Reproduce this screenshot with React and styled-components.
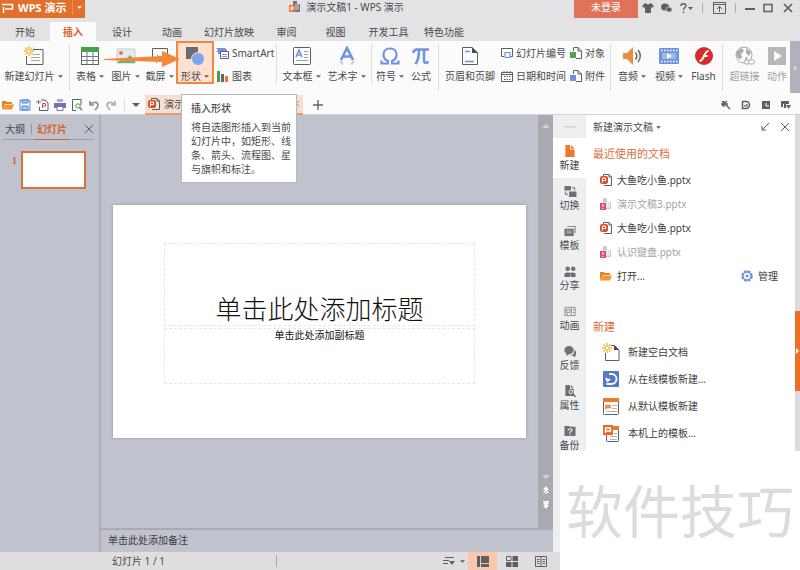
import styled, { createGlobalStyle } from "styled-components";

const GlobalStyle = createGlobalStyle`
  * {
    box-sizing: border-box;
  }

  body {
    margin: 0;
    background: #fff;
    color: #4a4a4a;
    font-family: "Noto Sans", "Noto Sans CJK SC", sans-serif;
    font-size: 10px;
    line-height: 12px;
  }

  button {
    margin: 0;
    padding: 0;
    border: 0;
    background: none;
    color: inherit;
    font: inherit;
    white-space: nowrap;
    cursor: pointer;
  }

  svg {
    display: block;
    flex: none;
  }
`;

const StyledApp = styled.div`
  display: flex;
  flex-direction: column;
  min-height: 100vh;
  overflow: hidden;
`;

const StyledTitleBar = styled.header`
  display: flex;
  height: 22px;
  background: #e3e3e5;
`;

const StyledLogo = styled.button`
  display: flex;
  align-items: center;
  gap: 4px;
  width: 85px;
  height: 18px;
  padding-left: 2px;
  padding-right: 3px;
  padding-bottom: 3px;
  background: #e0702c;
  color: #fff;
  font-size: 11px;
  font-weight: bold;
`;

const StyledLogoMenu = styled.span`
  margin-left: auto;
  padding: 6px 0 6px 4px;
  border-left: 1px solid #e99260;
`;

const StyledWindowTitle = styled.div`
  display: flex;
  flex: 1;
  align-items: center;
  justify-content: center;
  gap: 5px;
  height: 14px;
  padding-left: 34px;
`;

const StyledLogin = styled.button`
  width: 64px;
  height: 18px;
  padding-bottom: 4px;
  background: #e0725a;
  color: #fff;
`;

const StyledWindowTools = styled.div`
  display: flex;
  align-items: center;
  height: 15px;
  width: 162px;
  padding: 0 6px 0 4px;
  justify-content: space-between;
  color: #5c5c60;
`;

const StyledTabs = styled.nav`
  display: flex;
  height: 19px;
  background: #e3e3e5;
`;

const StyledTab = styled.button`
  width: ${({ $width }) => $width}px;
  background: ${({ $active }) => ($active ? "#fbfbfb" : "transparent")};
  color: ${({ $active }) => ($active ? "#dc6526" : "#4a4a4a")};
  font-weight: ${({ $active }) => ($active ? "bold" : "normal")};
`;

const StyledRibbon = styled.div`
  position: relative;
  display: flex;
  height: 54px;
  background: #fbfbfb;
`;

const StyledRibbonButton = styled.button`
  display: flex;
  flex-direction: column;
  align-items: center;
  gap: 4px;
  width: ${({ $width }) => $width}px;
  height: 43px;
  padding-top: 5px;
  opacity: ${({ $disabled }) => ($disabled ? 0.5 : 1)};
  background: ${({ $marked }) => ($marked ? "#fde0d0" : "none")};
  box-shadow: ${({ $marked }) => ($marked ? "inset 0 0 0 2px #f5883a" : "none")};
`;

const StyledLabel = styled.span`
  display: flex;
  align-items: center;
  gap: 3px;
`;

const StyledRibbonList = styled.div`
  display: flex;
  flex-direction: column;
  gap: 11px;
  width: ${({ $width }) => $width}px;
  padding-top: 6px;
  padding-left: 2px;

  & button {
    display: flex;
    align-items: center;
    gap: 3px;
    height: 12px;
  }
`;

const StyledDivider = styled.div`
  width: 1px;
  height: ${({ $height }) => $height || 40}px;
  margin: 3px 2px;
  background: ${({ $dark }) => ($dark ? "#adadb1" : "#dedee0")};
`;

const StyledRibbonMore = styled.button`
  width: 10px;
  height: 52px;
  margin-left: auto;
  background: #b0b1bb;
  color: #fff;
`;

const StyledPointer = styled.svg`
  position: absolute;
  left: 104px;
  top: 9px;
`;

const StyledQuickBar = styled.div`
  position: relative;
  display: flex;
  align-items: center;
  height: 20px;
  background: #fbfbfb;
  border-bottom: 1px solid #d4d5da;
`;

const StyledQuickTools = styled.div`
  display: flex;
  align-items: center;
  gap: ${({ $gap }) => $gap}px;
  margin-left: ${({ $end }) => ($end ? "auto" : 0)};
  padding-left: ${({ $start }) => ($start ? 2 : 0)}px;
  padding-right: ${({ $end }) => ($end ? 9 : 2)}px;
  color: #55555a;
`;

const StyledDocTab = styled.div`
  display: flex;
  align-items: center;
  gap: 4px;
  width: 158px;
  height: 20px;
  margin-left: 3px;
  padding: 0 4px 0 3px;
  background: #f5dfd0;
  border-bottom: 2px solid #e99a70;

  & button {
    margin-left: auto;
  }
`;

const StyledTooltip = styled.div`
  position: absolute;
  z-index: 2;
  left: 181px;
  top: -1px;
  width: 116px;
  padding: 7px 4px 6px 9px;
  border: 1px solid #b9b9bd;
  background: #fff;
  line-height: 14px;

  & strong {
    display: block;
    margin-bottom: 6px;
    line-height: 12px;
    font-weight: 500;
  }
`;

const StyledMain = styled.main`
  display: grid;
  flex: 1;
  grid-template-columns: 1fr 7px 240px;
  grid-template-rows: auto 1fr 18px;
`;

const StyledWorkspace = styled.div`
  grid-column: 1;
  grid-row: 1 / 3;
  display: grid;
  grid-template-columns: 101px 1fr;
  background: #c0c2cd;
`;

const StyledOutline = styled.section`
  padding: 6px 5px 0 3px;
  border-right: 2px solid #adaeb9;
`;

const StyledOutlineTabs = styled.div`
  display: flex;
  align-items: flex-start;
  height: 19px;
  padding-left: 2px;
  border-bottom: 1px solid #9c9da8;
`;

const StyledOutlineTab = styled.button`
  height: 19px;
  padding: 2px 2px 5px;
  padding-left: ${({ $active }) => ($active ? 2 : 0)}px;
  color: ${({ $active }) => ($active ? "#d9622a" : "#4a4a4a")};
  font-weight: ${({ $active }) => ($active ? "bold" : "normal")};
  border-bottom: ${({ $active }) => ($active ? "1px solid #d9622a" : "0")};
`;

const StyledOutlineBar = styled.span`
  width: 1px;
  height: 10px;
  margin: 3px 3px 0 4px;
  background: #8f909a;
`;

const StyledClose = styled.button`
  margin: 4px 1px 0 auto;
`;

const StyledThumbRow = styled.div`
  display: flex;
  gap: 4px;
  padding: 11px 0 0 9px;
  color: #d9622a;
  font-family: "Liberation Serif", serif;
  font-weight: bold;
  line-height: 20px;
`;

const StyledThumb = styled.button`
  width: 65px;
  height: 38px;
  border: 2px solid #d9713a;
  background: #fff;
`;

const StyledEditor = styled.section`
  display: grid;
  grid-template-columns: 1fr 15px;
  grid-template-rows: 1fr 24px;
`;

const StyledCanvas = styled.div`
  display: flex;
  align-items: center;
  justify-content: center;
`;

const StyledSlide = styled.div`
  display: flex;
  flex-direction: column;
  gap: 2px;
  width: calc(100% - 24px);
  aspect-ratio: 16 / 9;
  padding: 38px 51px 54px;
  background: #fff;
  box-shadow: 0 0 3px #8f909c;
  color: #111;
  text-align: center;
`;

const StyledSlideTitle = styled.h1`
  display: flex;
  flex: 3;
  align-items: flex-end;
  justify-content: center;
  margin: 0;
  border: 1px dashed #e6e6e8;
  font-family: "Noto Sans CJK SC", sans-serif;
  font-size: 26px;
  font-weight: 300;
  line-height: 34px;
`;

const StyledSlideSubtitle = styled.p`
  flex: 2;
  margin: 0;
  border: 1px dashed #e6e6e8;
`;

const StyledScroll = styled.div`
  display: flex;
  flex-direction: column;
  align-items: center;
  gap: 5px;
  padding: 8px 0 18px;
  background: #a9a9b2;
  color: #fff;

  & button:first-child {
    margin-bottom: auto;
  }
`;

const StyledNotes = styled.div`
  grid-column: 1 / 3;
  padding: 4px 7px;
  border-top: 2px solid #a9aab5;
  color: #3c3c40;
`;

const StyledGutter = styled.div`
  grid-column: 2;
  grid-row: 2;
  background: #eeeff1;
`;

const StyledStatus = styled.footer`
  grid-column: 1 / 3;
  grid-row: 3;
  display: flex;
  align-items: center;
  background: #dedee0;
  padding: 0 5px 0 112px;
`;

const StyledPage = styled.span`
  width: 165px;
  border-right: 1px solid #a6a6aa;
`;

const StyledViews = styled.div`
  display: flex;
  align-items: stretch;
  height: 18px;
  margin-left: auto;
  color: #5a5a5c;
`;

const StyledView = styled.button`
  display: flex;
  align-items: center;
  justify-content: center;
  gap: 5px;
  width: 29px;
  background: ${({ $active }) => ($active ? "#fac7ae" : "none")};
`;

const StyledAside = styled.aside`
  grid-column: 2 / 4;
  grid-row: 1;
  display: grid;
  grid-template-columns: 33px 1fr 5px;
  background: #fff;
`;

const StyledSideTabs = styled.nav`
  display: flex;
  flex-direction: column;
  background: #eeeff1;
`;

const StyledGrip = styled.span`
  width: 12px;
  height: 2px;
  margin: 11px auto 10px;
  background: #dadbde;
`;

const StyledSideTab = styled.button`
  display: flex;
  flex-direction: column;
  align-items: center;
  gap: 2px;
  padding: 7px 0;
  background: ${({ $active }) => ($active ? "#fff" : "none")};
  color: ${({ $active }) => ($active ? "#3c3c40" : "#4a4a4a")};

  &:last-child {
    padding-bottom: 0;
  }
`;

const StyledPanel = styled.section`
  padding: 6px 6px 0 7px;
`;

const StyledPanelHeader = styled.div`
  display: flex;
  align-items: center;
  gap: 12px;
  height: 12px;

  & button:first-child {
    margin-right: auto;
  }
`;

const StyledPanelTitle = styled.h2`
  margin: ${({ $top }) => $top}px 0 0;
  color: #d9713c;
  font-size: 11px;
  font-weight: normal;
  line-height: 16px;
`;

const StyledPanelList = styled.div`
  display: flex;
  flex-direction: column;
  align-items: flex-start;
  padding-top: ${({ $top }) => $top}px;
`;

const StyledPanelRow = styled.div`
  display: flex;
  justify-content: space-between;
  padding-right: 11px;
`;

const StyledRecent = styled.button`
  display: flex;
  align-items: center;
  gap: 5px;
  height: 24px;
  padding-left: ${({ $plain }) => ($plain ? 0 : 7)}px;
  color: ${({ $missing }) => ($missing ? "#a3a3a6" : "#3c3c40")};
`;

const StyledNewItem = styled(StyledRecent)`
  gap: 8px;
  height: 27px;
  padding-left: 9px;
`;

const StyledEdge = styled.div`
  display: flex;
  align-items: flex-end;
  padding-bottom: 60px;
  background: #dcdce0;

  & button {
    width: 5px;
    height: 80px;
    background: #ee6f23;
  }
`;

const StyledWatermark = styled.div`
  grid-column: 3;
  grid-row: 2 / 4;
  display: flex;
  align-items: center;
  justify-content: center;
  padding-bottom: 6px;
  background: #fff;
  color: #dcdcdc;
  font-family: "Noto Sans CJK SC", sans-serif;
  font-size: 57px;
  line-height: 60px;
  white-space: nowrap;
`;

const GREY = "#5f5f63";
const BLUE = "#6f94dc";
const ORANGE = "#ee7830";

const Icon = ({ w = 12, h = w, box = `0 0 ${w} ${h}`, children }) => (
  <svg width={w} height={h} viewBox={box} fill="none" stroke={GREY} aria-hidden="true">
    {children}
  </svg>
);

const Caret = ({ color = GREY, w = 5 }) => (
  <svg width={w} height={w > 5 ? 4 : 3} viewBox="0 0 6 3" aria-hidden="true">
    <path d="M0 0h6L3 3z" fill={color} />
  </svg>
);

const Cross = ({ size = 8 }) => (
  <Icon w={size} box="0 0 8 8">
    <path d="M0 0l8 8M8 0L0 8" />
  </Icon>
);

const Spark = () => (
  <g stroke="#eeb92c" strokeWidth="1.4">
    <path d="M5 0v2.500M5 7.500V10M0 5h2.500M7.500 5H10M1.500 1.500l1.700 1.700M6.800 6.800l1.700 1.700M8.500 1.500L6.800 3.200M3.200 6.800L1.500 8.500" />
    <circle cx="5" cy="5" r="1.800" fill="#fff" strokeWidth="1" />
  </g>
);

const DocIcon = ({ missing }) => (
  <Icon w={12}>
    {missing ? (
      <>
        <path d="M3 0h4v4h4v7H3z" fill="#cbcbce" stroke="none" />
        <path d="M5 5h5M6 7h4M6 9h4M8 1v2" stroke="#fff" />
        <path d="M0 5h6v7H0z" fill="#dd5064" stroke="none" />
        <path d="M3 6v3M3 10v1" stroke="#fff" />
      </>
    ) : (
      <>
        <path d="M3.500 3V.5H9L11.500 3v8.500H4" />
        <path d="M9 .5V3h2.500" />
        <rect x="0" y="2" width="8" height="8" rx="2" fill="#d9532f" stroke="none" />
        <path d="M2.500 8.500V4h3v2.500h-3" stroke="#fff" />
      </>
    )}
  </Icon>
);

const FolderIcon = () => (
  <Icon w={12} h={10}>
    <path d="M0 9V1h4l1 1h5v2H3z" fill="#e98320" stroke="none" />
    <path d="M3 4h9l-2 5.500H0z" fill="#f5952f" stroke="none" />
    <path d="M2.700 4.500h8" stroke="#fff" strokeWidth=".6" />
  </Icon>
);

const newSlideIcon = (
  <Icon w={20}>
    <path d="M9 3.500h10v15H2.500V10" />
    <path d="M9 8.500h7M7 11.500h9M7 14.500h9" stroke="#a9a9ad" />
    <Spark />
  </Icon>
);

const tableIcon = (
  <Icon w={20}>
    <rect x="1.500" y="1.500" width="17" height="17" fill="#fff" />
    <path d="M1 1h18v5H1z" fill="#48a04a" stroke="none" />
    <path d="M1 10.500h18M1 14.500h18M7 6v13M13 6v13" stroke="#77777b" />
  </Icon>
);

const pictureIcon = (
  <Icon w={20}>
    <path d="M1 3h18v14H1z" fill="#e4eaf2" stroke="#c5cbd4" />
    <circle cx="5" cy="7" r="2" fill={ORANGE} stroke="none" />
    <path d="M1 17l5-5 3 2 5-5 5 5v3z" fill="#7bae6c" stroke="none" />
  </Icon>
);

const captureIcon = (
  <Icon w={20}>
    <path d="M2.500 12V2.500h15V12" />
    <path d="M6 17l7-8M14 17L7 9" stroke="#8a8a8e" />
  </Icon>
);

const shapesIcon = (
  <Icon w={20}>
    <path d="M1 1h12v12H1z" fill="#6c6c70" stroke="none" />
    <circle cx="13" cy="13" r="6.500" fill="#7fa5ea" stroke="#fde0d0" />
  </Icon>
);

const textBoxIcon = (
  <Icon w={20}>
    <rect x="1.500" y="1.500" width="17" height="17" rx="1" />
    <path d="M4 11l3-7 3 7M5 9h4" stroke={BLUE} strokeWidth="1.600" />
    <path d="M12 5.500h4M12 8.500h4M12 11.500h4M4 14.500h12" stroke="#a0a0a4" />
  </Icon>
);

const wordArtIcon = (
  <Icon w={20}>
    <path d="M4 14L10 2l6 12M6 10.500h8" stroke={BLUE} strokeWidth="2.600" />
    <path d="M3.500 15l2 3.500M16.500 15l-2 3.500" stroke="#b9cbee" strokeWidth="2" />
  </Icon>
);

const omegaIcon = (
  <Icon w={20}>
    <path
      d="M1.500 14.500v3H8v-2.500C5 14 3.500 12 3.500 8.800 3.500 5 6 2.500 10 2.500s6.500 2.500 6.500 6.300c0 3.200-1.500 5.200-4.500 6.200v2.500h6.500v-3"
      stroke={BLUE}
      strokeWidth="2.200"
    />
  </Icon>
);

const piIcon = (
  <Icon w={20}>
    <path
      d="M2 7c1-3 2-3.500 4-3.500h12M8 4c0 6-.5 10-3.500 14M13 4v10c0 3 2 4 4.500 1.500"
      stroke={BLUE}
      strokeWidth="2.600"
    />
  </Icon>
);

const headerIcon = (
  <Icon w={20}>
    <path d="M2.500 1.500H12L17.500 7v11.500h-15z" />
    <path d="M12 1v6h6z" fill="#4c4c50" stroke="none" />
    <path d="M5 5.500h5M5 15.500h9" stroke={BLUE} strokeWidth="1.500" />
  </Icon>
);

const audioIcon = (
  <Icon w={20}>
    <path d="M1 7h4l6-6v18l-6-6H1z" fill="#ef8a41" stroke="none" />
    <path d="M13.500 6.500c1.500 2 1.500 5 0 7M16 4c3 3.500 3 8.500 0 12" strokeWidth="1.400" />
  </Icon>
);

const videoIcon = (
  <Icon w={20}>
    <rect x="0" y="2" width="20" height="16" rx="1" fill="#6f94d8" stroke="none" />
    <path d="M2 4.500h17M2 15.500h17" stroke="#fff" strokeWidth="1.500" strokeDasharray="1.500 1.500" />
    <path d="M3 7h14v6H3z" fill="#9db9ea" stroke="none" />
    <path d="M8 7l5 3-5 3z" fill="#fff" stroke="none" />
  </Icon>
);

const flashIcon = (
  <Icon w={20}>
    <circle cx="10" cy="10" r="9" fill="#d92b2b" stroke="none" />
    <path d="M14.500 5C10 5 10 15 5.500 15M9 10h4.500" stroke="#fff" strokeWidth="2" />
  </Icon>
);

const linkIcon = (
  <Icon w={20}>
    <circle cx="9" cy="9" r="8" />
    <path d="M2 5l5-3 2 3-3 3 1 4-3 1-3-4zM11 2l5 4-2 4-3-3zM10 11l3 1-2 4z" fill={GREY} stroke="none" />
    <rect x="9" y="14" width="6" height="4" rx="2" fill="#fff" />
    <rect x="13.500" y="14" width="6" height="4" rx="2" fill="#fff" />
  </Icon>
);

const actionIcon = (
  <Icon w={20}>
    <path d="M1 1h18v18H1z" fill="#77777a" stroke="none" />
    <path d="M7 5l8 5-8 5z" fill="#fff" stroke="none" />
  </Icon>
);

const smartArtIcon = (
  <Icon w={13} h={12}>
    <path d="M0 1h9l2 2v1H4v3H2V5H0l2-2z" fill={BLUE} stroke="none" />
    <path d="M4.500 4.500h8v7h-8z" fill="#fff" />
    <path d="M6 7.500h5M6 9.500h5" stroke={BLUE} />
  </Icon>
);

const chartIcon = (
  <Icon w={13} h={12}>
    <path d="M1 1h3v11H1z" fill="#4d9e4f" stroke="none" />
    <path d="M5 4h3v8H5z" fill="#66666a" stroke="none" />
    <path d="M9 6h3v6H9z" fill={ORANGE} stroke="none" />
  </Icon>
);

const pageNumIcon = (
  <Icon w={12}>
    <path d="M3 9.500H.5v-8h11v8H9" />
    <path d="M4 5.500h5v5H4z" stroke={BLUE} strokeWidth="1.200" />
  </Icon>
);

const calendarIcon = (
  <Icon w={12}>
    <path d="M.5 2.500h11v9H.5zM1 4.500h10" />
    <path d="M3 1v2M6 1v2M9 1v2M3 6.500h7M3 9.500h7" strokeDasharray="1.500 1" />
  </Icon>
);

const attachIcon = (color) => (
  <Icon w={12}>
    <path d="M4 .5h4L11.500 4v7.500H6M8 .5V4h3.500M3.500 4V.5" />
    <path d="M0 5h6v6H0z" fill={color} stroke="none" />
  </Icon>
);

const quickIcons = [
  ["打开", <FolderIcon />],
  [
    "保存",
    <Icon w={12}>
      <path d="M1 1h9l1 1v9H1z" stroke="#4f86d6" />
      <path d="M3 1h6v3H3zM3 7h6v4H3z" fill="#a9c5f0" stroke="#4f86d6" />
    </Icon>,
  ],
  [
    "输出为PDF",
    <Icon w={13} h={12}>
      <path d="M5 1h4l3 3v7.500H3.500V8" />
      <path d="M0 3h5M2.500 1v4" stroke="#48a04a" />
      <path d="M6.500 9V4.500h3V7h-3" stroke="#dd4b52" />
    </Icon>,
  ],
  [
    "打印",
    <Icon w={12}>
      <path d="M3 0h6v3H3z" fill="#aca9d8" stroke="none" />
      <path d="M0 4h12v5H0z" fill="#7671b8" stroke="none" />
      <path d="M3 7.500h6v4H3z" fill="#fff" stroke="#7671b8" />
    </Icon>,
  ],
  [
    "打印预览",
    <Icon w={12}>
      <path d="M5 11.500H1.500V.5H10V6" />
      <circle cx="7" cy="7" r="2.200" stroke="#48a04a" />
      <path d="M8.500 8.500L11 11" stroke="#48a04a" strokeWidth="1.500" />
    </Icon>,
  ],
  [
    "撤销",
    <Icon w={12}>
      <path d="M2 2v4h4M2 6c3-4 8-3 8 0 0 2-1 3-3 5" stroke="#929296" strokeWidth="1.700" />
    </Icon>,
  ],
  [
    "恢复",
    <Icon w={12}>
      <path d="M10 2v4H6M10 6C7 2 2 3 2 6c0 2 1 3 3 5" stroke="#b0b0b4" strokeWidth="1.700" />
    </Icon>,
  ],
];

const quickEndIcons = [
  [
    "魔法",
    <Icon w={10}>
      <path d="M3 1v6M0 4h7M1 1l8 8M6 1L1 6" strokeWidth="1.300" />
    </Icon>,
  ],
  [
    "稻壳",
    <Icon w={10}>
      <path d="M1.500 1.500H5a3.500 3.500 0 010 7H1.500z" strokeWidth="1.500" />
      <path d="M3 5l1 1.500L6 4v3" />
    </Icon>,
  ],
  [
    "历史",
    <Icon w={10}>
      <path d="M1 1h8v8H1z" fill={GREY} stroke="none" />
      <path d="M5 3v3h3" stroke="#fff" />
    </Icon>,
  ],
  [
    "皮肤",
    <Icon w={10}>
      <path d="M0 1h8v3H5v4H3V4H2v3H0z" fill={GREY} stroke="none" />
      <path d="M5 5h5L7.500 9z" fill={GREY} stroke="none" />
    </Icon>,
  ],
];

const tabs = [
  ["开始", 50],
  ["插入", 46],
  ["设计", 52],
  ["动画", 48],
  ["幻灯片放映", 66],
  ["审阅", 49],
  ["视图", 49],
  ["开发工具", 57],
  ["特色功能", 54],
];

const sideTabs = [
  ["新建", <path d="M2 0h5v5h5v8H2zM8 0l4 4H8z" fill={ORANGE} stroke="none" />],
  [
    "切换",
    <>
      <path d="M1 1h7v5H1zM6 7h8v6H6z" fill="#707074" stroke="none" />
      <path d="M9 3h3v3M2 7v3h3" />
    </>,
  ],
  [
    "模板",
    <>
      <path d="M4 1h9v8h-1V2H4z" fill="#707074" stroke="none" />
      <path d="M1 4h10v8H1z" fill="#707074" stroke="none" />
      <path d="M3 6.500h6M3 8.500h6" stroke="#c5c5c8" />
    </>,
  ],
  [
    "分享",
    <path
      d="M1 13V9l3-1h2l1 1 1-1h2l3 1v4H8V9.500L7 13zM2 4a2.500 2.500 0 015 0 2.500 2.500 0 01-5 0zM8 4a2.500 2.500 0 015 0 2.500 2.500 0 01-5 0z"
      fill="#707074"
      stroke="none"
    />,
  ],
  [
    "动画",
    <>
      <path d="M1.500 2.500h11v9h-11zM8.500 3v8" stroke="#88888c" />
      <path d="M3 5h4v3H3zM10 5h2M10 8h2M4 9v2" stroke="#88888c" />
    </>,
  ],
  [
    "反馈",
    <path
      d="M6 1c3 0 5 2 5 4.500S9 10 6 10l-3 2v-3C-.5 7 .5 1 6 1zM12 5c2 2 2 4 1 6v2l-3-1H7c3 0 5-3 5-7z"
      fill="#707074"
      stroke="none"
    />,
  ],
  [
    "属性",
    <>
      <path d="M2 0h5v4h4v8H2zM8 0l3 3H8z" fill="#707074" stroke="none" />
      <circle cx="8" cy="7.500" r="2" stroke="#fff" />
      <path d="M9.500 9L13 13" strokeWidth="1.500" />
    </>,
  ],
  [
    "备份",
    <>
      <path d="M1 1h5l1 1h6v10H1z" fill="#707074" stroke="none" />
      <path d="M5 6c0-3 5-2 4 0L7 8v1M7 10v1" stroke="#fff" strokeWidth="1.200" />
    </>,
  ],
];

const recents = [
  ["大鱼吃小鱼.pptx", false],
  ["演示文稿3.pptx", true],
  ["大鱼吃小鱼.pptx", false],
  ["认识键盘.pptx", true],
];

const newItems = [
  [
    "新建空白文档",
    <Icon w={18}>
      <path d="M9 2.500h3.500L17 7v10.500H3.500V10" />
      <path d="M12 2v5h5z" fill="#4c4c50" stroke="none" />
      <Spark />
    </Icon>,
  ],
  [
    "从在线模板新建...",
    <Icon w={18}>
      <rect x="1" y="1" width="16" height="16" rx="1" fill="#5479c8" stroke="none" />
      <path d="M7 4h2.500a5 5 0 010 10H4.500M4 8l1.500 3L8 9" stroke="#fff" strokeWidth="1.800" />
    </Icon>,
  ],
  [
    "从默认模板新建",
    <Icon w={18}>
      <rect x="1.500" y="1.500" width="15" height="16" rx="1" />
      <path d="M1 1h16v4H1z" fill={ORANGE} stroke="none" />
      <path d="M4 12.500V8.500h4v2H4" stroke={ORANGE} strokeWidth="1.300" />
      <path d="M10 8.500h5M10 11.500h5M4 14.500h11" stroke="#b4b4b8" />
    </Icon>,
  ],
  [
    "本机上的模板...",
    <Icon w={18}>
      <rect x="4.500" y="2.500" width="12" height="15" rx="1" fill="#fff" />
      <path d="M5 2h12v4H5z" fill={ORANGE} stroke="none" />
      <path d="M12 9.500h3M8 12.500h7M8 15.500h7" stroke="#b4b4b8" />
      <path d="M1 1h10v10H1z" fill="#e86a24" stroke="none" />
      <path d="M3.500 9V4h5v3h-5" stroke="#fff" strokeWidth="1.400" />
    </Icon>,
  ],
];

const RibbonButton = ({ label, icon, width, menu, marked, disabled }) => (
  <StyledRibbonButton $width={width} $marked={marked} $disabled={disabled}>
    {icon}
    <StyledLabel>
      {label}
      {menu && <Caret />}
    </StyledLabel>
  </StyledRibbonButton>
);

const TitleBar = () => (
  <StyledTitleBar>
    <StyledLogo>
      <Icon w={12} h={10}>
        <path d="M0 1.500h10.500v4.500H3M1.500 4v6" stroke="#fff" strokeWidth="1.500" />
      </Icon>
      WPS 演示
      <StyledLogoMenu>
        <Caret color="#fff" />
      </StyledLogoMenu>
    </StyledLogo>
    <StyledWindowTitle>
      <Icon w={12}>
        <path d="M4 0h4v3h3v8H4z" fill="#77777b" stroke="none" />
        <path d="M6 4h4M6 6h4M6 8h4" stroke="#d6d6d8" />
        <path d="M0 4h6v7H0z" fill={ORANGE} stroke="none" />
        <path d="M2 9.500V6h2v2H2" stroke="#fff" />
      </Icon>
      演示文稿1 - WPS 演示
    </StyledWindowTitle>
    <StyledLogin>未登录</StyledLogin>
    <StyledWindowTools>
      <button aria-label="皮肤">
        <Icon w={12} h={10}>
          <path d="M3 0l3 1.500L9 0l3 3-2 2-1-1v6H3V4L2 5 0 3z" fill={GREY} stroke="none" />
        </Icon>
      </button>
      <button aria-label="反馈">
        <Icon w={11} h={10}>
          <ellipse cx="4" cy="4" rx="4" ry="3.500" fill={GREY} stroke="none" />
          <ellipse cx="8" cy="6.500" rx="3" ry="2.500" fill={GREY} stroke="#e3e3e5" strokeWidth=".6" />
        </Icon>
      </button>
      <button aria-label="帮助">
        <Icon w={13} h={10}>
          <path d="M1 3c0-3 5-3 5-.5C6 4.500 3.500 4 3.500 7M3.500 8.500V10" strokeWidth="1.400" />
          <path d="M8 4h5l-2.500 3z" fill={GREY} stroke="none" />
        </Icon>
      </button>
      <StyledDivider $height={10} $dark />
      <button aria-label="收起功能区">
        <Icon w={13} h={12}>
          <path d="M.5.500h12v11H.5zM1 2.500h11M6.500 10V4.500M4 7l2.500-2.500L9 7" />
        </Icon>
      </button>
      <StyledDivider $height={10} $dark />
      <button aria-label="最小化">
        <Icon w={10}>
          <path d="M0 6h10" strokeWidth="2" />
        </Icon>
      </button>
      <button aria-label="最大化">
        <Icon w={10}>
          <path d="M1 1.500h8v7H1z" strokeWidth="1.500" />
        </Icon>
      </button>
      <button aria-label="关闭">
        <Icon w={14} h={10}>
          <path d="M4 1l8 8M12 1L4 9" strokeWidth="1.700" />
        </Icon>
      </button>
    </StyledWindowTools>
  </StyledTitleBar>
);

const Ribbon = () => (
  <StyledRibbon>
    <RibbonButton label="新建幻灯片" icon={newSlideIcon} width={67} menu />
    <StyledDivider $height={47} />
    <RibbonButton label="表格" icon={tableIcon} width={36} menu />
    <RibbonButton label="图片" icon={pictureIcon} width={35} menu />
    <RibbonButton label="截屏" icon={captureIcon} width={33} menu />
    <RibbonButton label="形状" icon={shapesIcon} width={38} menu marked />
    <StyledRibbonList $width={60}>
      <button>{smartArtIcon}SmartArt</button>
      <button>{chartIcon}图表</button>
    </StyledRibbonList>
    <StyledDivider />
    <RibbonButton label="文本框" icon={textBoxIcon} width={45} menu />
    <RibbonButton label="艺术字" icon={wordArtIcon} width={45} menu />
    <StyledDivider />
    <RibbonButton label="符号" icon={omegaIcon} width={32} menu />
    <RibbonButton label="公式" icon={piIcon} width={30} />
    <StyledDivider $height={47} />
    <RibbonButton label="页眉和页脚" icon={headerIcon} width={58} />
    <StyledRibbonList $width={69}>
      <button>{pageNumIcon}幻灯片编号</button>
      <button>{calendarIcon}日期和时间</button>
    </StyledRibbonList>
    <StyledRibbonList $width={40}>
      <button>{attachIcon("#4fa34e")}对象</button>
      <button>{attachIcon(BLUE)}附件</button>
    </StyledRibbonList>
    <StyledDivider $height={47} />
    <RibbonButton label="音频" icon={audioIcon} width={38} menu />
    <RibbonButton label="视频" icon={videoIcon} width={36} menu />
    <RibbonButton label="Flash" icon={flashIcon} width={33} />
    <StyledDivider $height={47} />
    <RibbonButton label="超链接" icon={linkIcon} width={39} disabled />
    <RibbonButton label="动作" icon={actionIcon} width={26} disabled />
    <StyledRibbonMore aria-label="更多">›</StyledRibbonMore>
    <StyledPointer width="76" height="18" viewBox="0 0 76 18" aria-hidden="true">
      <path d="M0 9l58-3V1l18 8-18 8v-5L0 10z" fill="#f5883a" />
    </StyledPointer>
  </StyledRibbon>
);

const QuickBar = () => (
  <StyledQuickBar>
    <StyledQuickTools $gap={5} $start>
      {quickIcons.map(([label, icon]) => (
        <button key={label} aria-label={label}>
          {icon}
        </button>
      ))}
      <StyledDivider $height={12} />
      <button aria-label="自定义">
        <Caret w={8} />
      </button>
    </StyledQuickTools>
    <StyledDocTab>
      <DocIcon />
      演示
      <button aria-label="关闭文档">
        <Cross size={5} />
      </button>
    </StyledDocTab>
    <StyledQuickTools $gap={0}>
      <StyledView aria-label="新建文档">
        <Icon w={10}>
          <path d="M5 0v10M0 5h10" strokeWidth="1.300" />
        </Icon>
      </StyledView>
    </StyledQuickTools>
    <StyledQuickTools $gap={10} $end>
      {quickEndIcons.map(([label, icon]) => (
        <button key={label} aria-label={label}>
          {icon}
        </button>
      ))}
    </StyledQuickTools>
    <StyledTooltip role="tooltip">
      <strong>插入形状</strong>
      将自选图形插入到当前幻灯片中，如矩形、线条、箭头、流程图、星与旗帜和标注。
    </StyledTooltip>
  </StyledQuickBar>
);

const Workspace = () => (
  <StyledWorkspace>
    <StyledOutline>
      <StyledOutlineTabs>
        <StyledOutlineTab>大纲</StyledOutlineTab>
        <StyledOutlineBar />
        <StyledOutlineTab $active>幻灯片</StyledOutlineTab>
        <StyledClose aria-label="关闭">
          <Cross />
        </StyledClose>
      </StyledOutlineTabs>
      <StyledThumbRow>
        1
        <StyledThumb aria-label="幻灯片 1" />
      </StyledThumbRow>
    </StyledOutline>
    <StyledEditor>
      <StyledCanvas>
        <StyledSlide>
          <StyledSlideTitle>单击此处添加标题</StyledSlideTitle>
          <StyledSlideSubtitle>单击此处添加副标题</StyledSlideSubtitle>
        </StyledSlide>
      </StyledCanvas>
      <StyledScroll>
        <button aria-label="向上">
          <Icon w={8} h={5}>
            <path d="M0 5h8L4 1z" fill="#d0d0d6" stroke="none" />
          </Icon>
        </button>
        <button aria-label="向下">
          <Icon w={8} h={5}>
            <path d="M0 0h8L4 4z" fill="#d0d0d6" stroke="none" />
          </Icon>
        </button>
        <button aria-label="上一张">
          <Icon w={8} h={10}>
            <path d="M1 5h6L4 1zM1 8h6L4 4zM3 7h2v2H3z" fill="#fff" stroke="none" />
          </Icon>
        </button>
        <button aria-label="下一张">
          <Icon w={8} h={10}>
            <path d="M1 1h6v1H5l2 1-3 3-3-3 2-1H1zM1 5h6L4 9z" fill="#fff" stroke="none" />
          </Icon>
        </button>
      </StyledScroll>
      <StyledNotes>单击此处添加备注</StyledNotes>
    </StyledEditor>
  </StyledWorkspace>
);

const TaskPane = () => (
  <StyledAside>
    <StyledSideTabs>
      <StyledGrip />
      {sideTabs.map(([label, icon], index) => (
        <StyledSideTab key={label} $active={index === 0}>
          <Icon w={14} h={12} box="0 0 14 13">
            {icon}
          </Icon>
          {label}
        </StyledSideTab>
      ))}
    </StyledSideTabs>
    <StyledPanel>
      <StyledPanelHeader>
        <button>
          <StyledLabel>
            新建演示文稿 <Caret />
          </StyledLabel>
        </button>
        <button aria-label="浮动">
          <Icon w={8}>
            <path d="M8 0L1 7M1 3v4h4" />
          </Icon>
        </button>
        <button aria-label="关闭">
          <Cross />
        </button>
      </StyledPanelHeader>
      <StyledPanelTitle $top={13}>最近使用的文档</StyledPanelTitle>
      <StyledPanelList $top={6}>
        {recents.map(([name, missing], index) => (
          <StyledRecent key={index} $missing={missing}>
            <DocIcon missing={missing} />
            {name}
          </StyledRecent>
        ))}
      </StyledPanelList>
      <StyledPanelRow>
        <StyledRecent>
          <FolderIcon />
          打开...
        </StyledRecent>
        <StyledRecent $plain>
          <Icon w={12}>
            <circle cx="6" cy="6" r="4.800" stroke={BLUE} strokeWidth="2" strokeDasharray="2.500 1.300" />
            <circle cx="6" cy="6" r="4" stroke={BLUE} strokeWidth="1.500" />
            <circle cx="6" cy="6" r="1.500" fill={BLUE} stroke="none" />
          </Icon>
          管理
        </StyledRecent>
      </StyledPanelRow>
      <StyledPanelTitle $top={31}>新建</StyledPanelTitle>
      <StyledPanelList $top={3}>
        {newItems.map(([name, icon]) => (
          <StyledNewItem key={name}>
            {icon}
            {name}
          </StyledNewItem>
        ))}
      </StyledPanelList>
    </StyledPanel>
    <StyledEdge>
      <button aria-label="展开">
        <Icon w={5} h={6}>
          <path d="M1 0l3 3-3 3z" fill="#fff" stroke="none" />
        </Icon>
      </button>
    </StyledEdge>
  </StyledAside>
);

const StatusBar = () => (
  <StyledStatus>
    <StyledPage>幻灯片 1 / 1</StyledPage>
    <StyledViews>
      <StyledView aria-label="备注">
        <Icon w={12} h={10}>
          <path d="M2 1.500h9M0 4.500h6M0 7.500h5" />
          <path d="M6 5h6L9 9z" fill={GREY} stroke="none" />
        </Icon>
        <Caret />
      </StyledView>
      <StyledView $active aria-label="普通视图">
        <Icon w={12} h={11}>
          <path d="M0 0h3v11H0zM4 0h8v7H4zM4 8h8v3H4z" fill={GREY} stroke="none" />
        </Icon>
      </StyledView>
      <StyledView aria-label="浏览视图">
        <Icon w={12} h={11}>
          <path d="M6.500 0H12v5H6.500zM0 6h5.500v5H0zM6.500 6H12v5H6.500z" fill={GREY} stroke="none" />
          <path d="M.5.500h4.500v4H.5z" />
        </Icon>
      </StyledView>
      <StyledView aria-label="阅读视图">
        <Icon w={12} h={11}>
          <path d="M.5.500h11v10H.5zM6 0v11M2 3.500h2.500M2 5.500h2.500M2 7.500h2.500M7.500 3.500H10M7.500 5.500H10M7.500 7.500H10" />
        </Icon>
      </StyledView>
    </StyledViews>
  </StyledStatus>
);

const App = () => (
  <StyledApp>
    <GlobalStyle />
    <TitleBar />
    <StyledTabs>
      {tabs.map(([label, width]) => (
        <StyledTab key={label} $width={width} $active={label === "插入"}>
          {label}
        </StyledTab>
      ))}
    </StyledTabs>
    <Ribbon />
    <QuickBar />
    <StyledMain>
      <Workspace />
      <StyledGutter />
      <StatusBar />
      <TaskPane />
      <StyledWatermark>软件技巧</StyledWatermark>
    </StyledMain>
  </StyledApp>
);

export default App;
